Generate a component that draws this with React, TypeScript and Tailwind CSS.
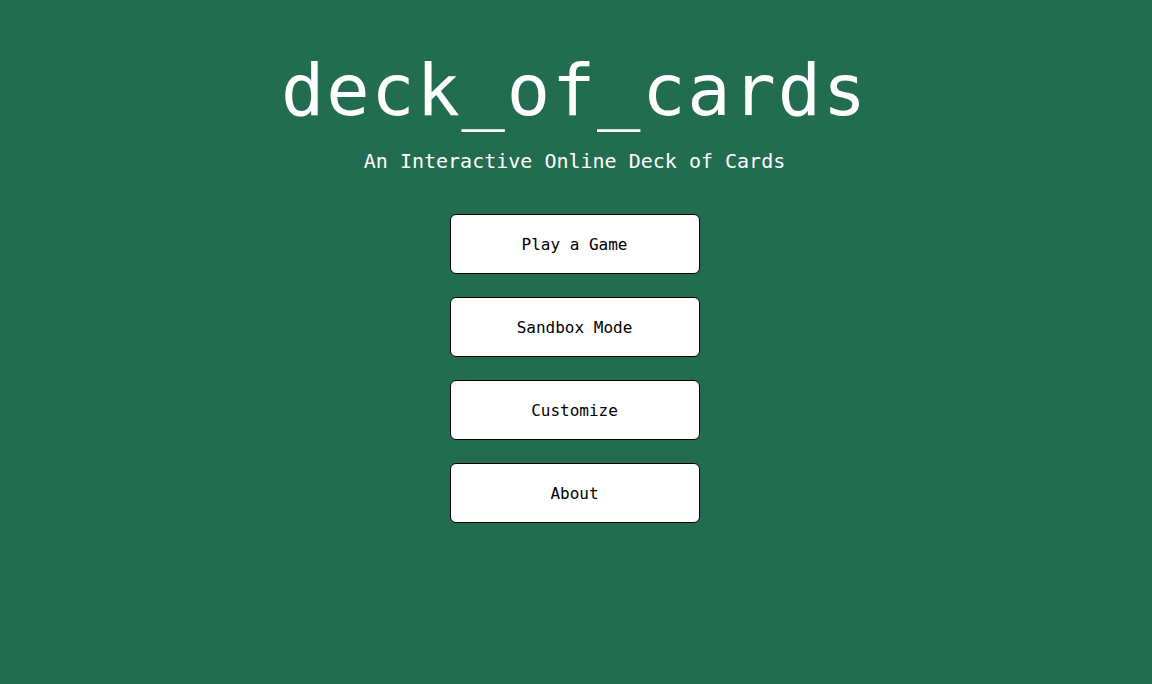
export default function App() {
  const buttons = ["Play a Game", "Sandbox Mode", "Customize", "About"]

  return (
    <div className="min-h-[684px] w-full bg-[#226c50] flex flex-col items-center pt-[54px] pr-[3px] font-['DejaVu_Sans_Mono',monospace] text-white">
      {/* Title */}
      <h1 className="text-[72px] leading-none tracking-[1.8px] mb-[25px]">deck_of_cards</h1>
      <p className="text-[20px] leading-none tracking-[0px] mb-[43px]">An Interactive Online Deck of Cards</p>

      {/* Menu */}
      <div className="flex flex-col gap-[23px]">
        {buttons.map((label) => (
          <button
            key={label}
            className="w-[250px] h-[60px] pt-[2px] bg-white text-black border border-black rounded-[6px] text-[16px]"
          >
            {label}
          </button>
        ))}
      </div>
    </div>
  )
}
